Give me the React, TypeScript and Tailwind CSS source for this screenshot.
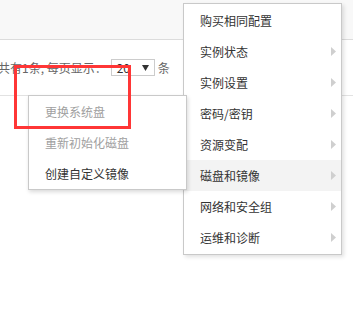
import { ReactNode } from "react";

const mainItems: { label: string; sub?: boolean; active?: boolean }[] = [
  { label: "购买相同配置" },
  { label: "实例状态", sub: true },
  { label: "实例设置", sub: true },
  { label: "密码/密钥", sub: true },
  { label: "资源变配", sub: true },
  { label: "磁盘和镜像", sub: true, active: true },
  { label: "网络和安全组", sub: true },
  { label: "运维和诊断", sub: true },
];

const subItems = [
  { label: "更换系统盘", disabled: true },
  { label: "重新初始化磁盘", disabled: true },
  { label: "创建自定义镜像", disabled: false },
];

function Arrow() {
  return (
    <svg width="5" height="9" viewBox="0 0 5 9" className="shrink-0">
      <path d="M0 0 L5 4.5 L0 9 Z" fill="#cfcfcf" />
    </svg>
  );
}

function MenuItem({
  children,
  active,
  muted,
  right,
}: {
  children: ReactNode;
  active?: boolean;
  muted?: boolean;
  right?: ReactNode;
}) {
  return (
    <div
      className={`flex h-[31px] items-center justify-between pl-4 pr-[5px] ${
        active ? "bg-[#f3f3f3]" : ""
      } ${muted ? "text-[#a0a0a0]" : "text-[#333]"}`}
    >
      <span>{children}</span>
      {right}
    </div>
  );
}

export default function App() {
  return (
    <div
      className="relative h-[319px] w-[353px] overflow-hidden bg-white text-[12px] leading-none"
      style={{ fontFamily: '"Noto Sans CJK SC", "Noto Sans", sans-serif' }}
    >
      <div className="h-[40px] border-b border-[#dcdcdc] bg-[#f8f8f8]" />

      <div className="mt-[19px] flex h-[17px] items-center text-[#666]">
        <span className="ml-[-2px] whitespace-nowrap">共有1条, 每页显示：</span>
        <div className="ml-[4px] flex h-[17px] w-[44px] items-center justify-between border border-[#ccc] pl-[5px] pr-[5px] text-[#333]">
          <span>20</span>
          <svg width="7" height="6" viewBox="0 0 7 6">
            <path d="M0 0 H7 L3.5 6 Z" fill="#333" />
          </svg>
        </div>
        <span className="ml-[3px]">条</span>
      </div>

      <div className="mt-[19px] border-b border-[#e2e2e2]" />

      {/* main dropdown */}
      <div className="absolute left-[183px] top-[3px] w-[159px] border border-[#c9c9c9] bg-white py-px shadow-[2px_2px_4px_rgba(0,0,0,0.12)]">
        {mainItems.map((it) => (
          <MenuItem key={it.label} active={it.active} right={it.sub ? <Arrow /> : null}>
            {it.label}
          </MenuItem>
        ))}
      </div>

      {/* submenu */}
      <div className="absolute left-[28px] top-[95px] w-[159px] border border-[#c9c9c9] bg-white shadow-[1px_2px_4px_rgba(0,0,0,0.15)]">
        {subItems.map((it) => (
          <MenuItem key={it.label} muted={it.disabled}>
            {it.label}
          </MenuItem>
        ))}
      </div>

      {/* annotation */}
      <div className="absolute left-[14px] top-[65px] h-[64px] w-[117px] border-[3px] border-[#ff3636]" />
    </div>
  );
}
